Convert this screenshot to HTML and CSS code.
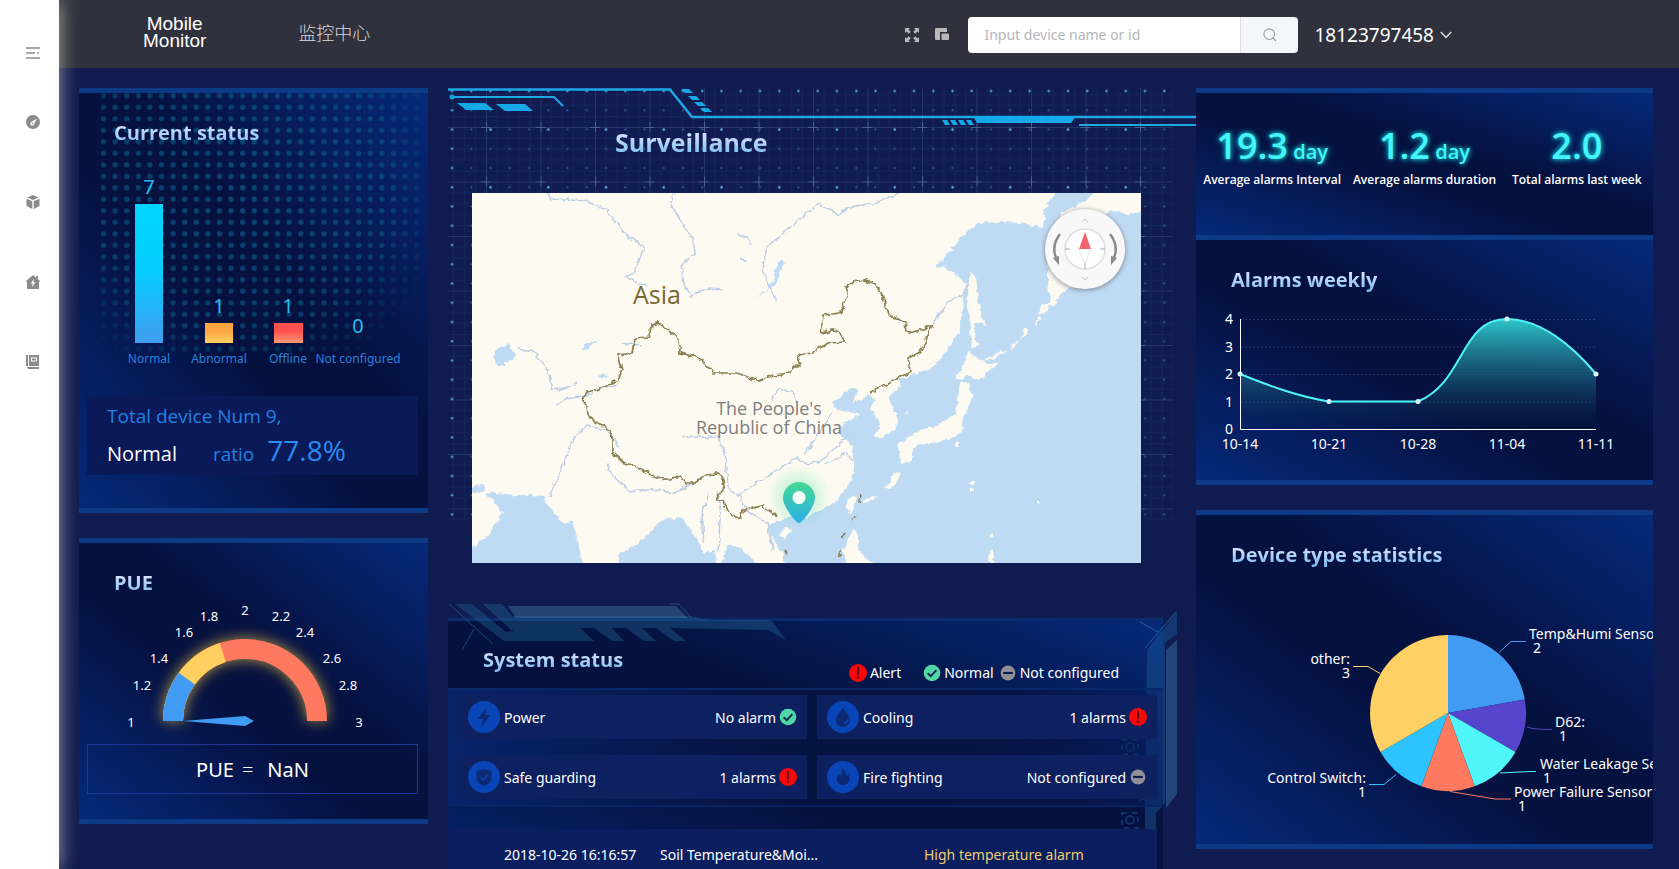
FILE: index.html
```html
<!DOCTYPE html>
<html lang="en">
<head>
<meta charset="utf-8">
<title>Mobile Monitor</title>
<link rel="stylesheet" href="styles.css">
</head>
<body>
<svg class="defs" aria-hidden="true">
  <defs>
    <symbol id="i-alert" viewBox="0 0 18 18"><circle cx="9" cy="9" r="9" fill="#f80808"/><path d="M9 3.500v7" stroke="#5a0714" stroke-width="2" stroke-linecap="round"/><circle cx="9" cy="13.800" r="1.200" fill="#5a0714"/></symbol>
    <symbol id="i-ok" viewBox="0 0 18 18"><circle cx="9" cy="9" r="8.300" fill="#52d6a4"/><path d="M4.600 9.200l3.200 3 5.600-6" fill="none" stroke="#0c2a50" stroke-width="1.900"/></symbol>
    <symbol id="i-none" viewBox="0 0 18 18"><circle cx="9" cy="9" r="7.400" fill="#908f98"/><path d="M4.200 9h9.600" stroke="#0c1f55" stroke-width="2.200"/></symbol>
  </defs>
</svg>
<div class="app">
  <aside class="side">
    <button class="side-btn side-toggle" aria-label="Toggle menu"><svg width="14" height="12" viewBox="0 0 14 12" fill="none" stroke="#8b8b8b" stroke-width="1.300"><path d="M0 1h14M0 11h14M0 6h9M11 6h2"/></svg></button>
    <button class="side-btn" aria-label="Dashboard"><svg width="14" height="14" viewBox="0 0 14 14"><circle cx="7" cy="7" r="7" fill="#8b8b8b"/><path d="M11 3.400L8.300 8.800a2 2 0 1 1-2.600-2z" fill="#fff"/><circle cx="6.600" cy="8.400" r=".8" fill="#8b8b8b"/></svg></button>
    <button class="side-btn" aria-label="Devices"><svg width="14" height="14" viewBox="0 0 14 14" fill="#8b8b8b"><path d="M7 0l5.600 2.500L7 5 1.400 2.500zM.5 3.700l5.800 2.600V14L.5 11zM13.500 3.700L7.700 6.300V14l5.800-3z"/></svg></button>
    <button class="side-btn" aria-label="Power station"><svg width="14" height="14" viewBox="0 0 14 14"><path d="M7 0l7 6-1 1.200V14H1V7.200L0 6zM10 1h2v3l-2-1.600z" fill="#8b8b8b"/><path d="M7.800 4L4.600 8.600h2L6 12l3.400-4.800h-2z" fill="#fff"/></svg></button>
    <button class="side-btn" aria-label="Reports"><svg width="14" height="14" viewBox="0 0 14 14"><path d="M0 0h2v11H0zM3 0h10v11H3zM1 12h12v2H2z" fill="#8b8b8b"/><path d="M5 2.500h6v4H5z" fill="#fff"/><path d="M6 3.500h4v2H6z" fill="#8b8b8b"/></svg></button>
  </aside>
  <div class="page">
    <header class="top">
      <a class="logo" href="#">Mobile<br>Monitor</a>
      <a class="crumb" href="#">监控中心</a>
      <div class="tools">
        <button class="tool" aria-label="Full screen"><svg width="14" height="14" viewBox="0 0 14 14" fill="#b9b8bd"><path d="M0 0h5L3.500 1.500l2.300 2.300-2 2L1.500 3.500 0 5zM14 0v5l-1.500-1.500-2.300 2.300-2-2 2.300-2.300L9 0zM0 14V9l1.500 1.500 2.300-2.300 2 2-2.300 2.300L5 14zM14 14H9l1.500-1.500-2.300-2.300 2-2 2.300 2.300L14 9z"/></svg></button>
        <button class="tool" aria-label="Theme"><svg width="14" height="14" viewBox="0 0 14 14" fill="#b9b8bd"><path d="M0 1q0-1 1-1h10q1 0 1 1v3H5v8H1q-1 0-1-1z"/><rect x="6.500" y="5.500" width="7.500" height="6.500" rx="1"/></svg></button>
        <form class="search">
          <input type="text" aria-label="Search device" placeholder="Input device name or id">
          <button type="button" aria-label="Search"><svg width="14" height="14" viewBox="0 0 14 14" fill="none" stroke="#9a9ca3" stroke-width="1.100"><circle cx="6.200" cy="6.200" r="5.300"/><path d="M10 10l3 3"/></svg></button>
        </form>
        <button class="user">18123797458 <svg width="12" height="8" viewBox="0 0 12 8" fill="none" stroke="#e6e6ea" stroke-width="1.300"><path d="M.8 1L6 6.500 11.200 1"/></svg></button>
      </div>
    </header>
    <main class="board">
      <div class="col">
        <section class="panel dotted">
          <svg class="dots" viewBox="0 0 349 264" aria-hidden="true">
            <defs>
              <pattern id="dp" width="11.600" height="11.500" patternUnits="userSpaceOnUse" x="19" y="-3"><circle cx="5.500" cy="5.700" r="2.700" fill="#0d5f88"/></pattern>
              <radialGradient id="dg" gradientUnits="userSpaceOnUse" cx="160" cy="90" r="215"><stop offset="0" stop-color="#fff" stop-opacity=".7"/><stop offset=".7" stop-color="#fff" stop-opacity=".55"/><stop offset="1" stop-color="#fff" stop-opacity="0"/></radialGradient>
              <mask id="dm"><rect width="349" height="264" fill="url(#dg)"/></mask>
            </defs>
            <rect x="20" width="322" height="260" fill="url(#dp)" mask="url(#dm)"/>
          </svg>
          <h2>Current status</h2>
          <svg class="chart" viewBox="79 147 349 243" role="img" aria-label="Devices by status">
            <defs>
              <linearGradient id="b1" x2="0" y2="1"><stop offset="0" stop-color="#00d4ff"/><stop offset=".5" stop-color="#06ccff"/><stop offset="1" stop-color="#429bef"/></linearGradient>
              <linearGradient id="b2" x2="0" y2="1"><stop offset=".4" stop-color="#ffa640"/><stop offset="1" stop-color="#ffd164"/></linearGradient>
              <linearGradient id="b3" x2="0" y2="1"><stop offset=".4" stop-color="#ff5050"/><stop offset="1" stop-color="#ff9a70"/></linearGradient>
            </defs>
            <rect x="135" y="204" width="28" height="139" fill="url(#b1)"/>
            <rect x="205" y="323" width="28" height="20" fill="url(#b2)"/>
            <rect x="274" y="323" width="29" height="20" fill="url(#b3)"/>
            <g class="bar-num"><text x="149" y="194">7</text><text x="219" y="313">1</text><text x="288" y="313">1</text><text x="358" y="333">0</text></g>
            <g class="bar-lab"><text x="149" y="363">Normal</text><text x="219" y="363">Abnormal</text><text x="288" y="363">Offline</text><text x="358" y="363">Not configured</text></g>
          </svg>
          <div class="total">
            <p>Total device Num 9,</p>
            <p class="ratio"><b>Normal</b><span>ratio</span><strong>77.8%</strong></p>
          </div>
        </section>
        <section class="panel pue">
          <h2>PUE</h2>
          <svg class="chart" viewBox="79 597 349 143" role="img" aria-label="PUE gauge">
            <defs><filter id="glow" x="-30%" y="-30%" width="160%" height="160%"><feGaussianBlur stdDeviation="7"/></filter></defs>
            <path d="M173 721A72 72 0 0 1 317 721" fill="none" stroke="#c9a545" stroke-width="22" opacity=".8" filter="url(#glow)"/>
            <g fill="none" stroke-width="20">
              <path d="M173 721A72 72 0 0 1 317 721" stroke="#ff7860"/>
              <path d="M173 721A72 72 0 0 1 222.800 652.500" stroke="#ffd060"/>
              <path d="M173 721A72 72 0 0 1 186.800 678.700" stroke="#429bf2"/>
            </g>
            <path d="M183 721l62-5 9 5-9 5z" fill="#429bf2"/>
            <g class="gauge-lab"><text x="131" y="727">1</text><text x="142" y="690">1.2</text><text x="159" y="663">1.4</text><text x="184" y="637">1.6</text><text x="209" y="621">1.8</text><text x="245" y="615">2</text><text x="281" y="621">2.2</text><text x="305" y="637">2.4</text><text x="332" y="663">2.6</text><text x="348" y="690">2.8</text><text x="359" y="727">3</text></g>
          </svg>
          <div class="pue-value"><span>PUE</span><i>=</i><span>NaN</span></div>
        </section>
      </div>

      <div class="col mid">
        <section class="surv">
          <svg class="surv-bg" viewBox="448 88 748 434" aria-hidden="true">
            <defs>
              <pattern id="g1" width="54.500" height="54.500" patternUnits="userSpaceOnUse" x="486" y="127"><path d="M0 11H54M0 22H54M0 33H54M0 44H54M11 0V54M22 0V54M33 0V54M44 0V54" stroke="#1c2f6a" stroke-width="1" opacity=".5"/><path d="M0 0H54.500M0 0V54.500" stroke="#2c3f78" stroke-width="2" opacity=".7"/><path d="M0 0H5M0 0V5M49.500 0h5M0 49.500v5" stroke="#4a5f92" stroke-width="2"/></pattern>
              <pattern id="g2" width="19.250" height="19.250" patternUnits="userSpaceOnUse" x="442" y="81"><circle cx="10" cy="10" r="1" fill="#2a639a"/></pattern>
              <pattern id="g3" width="57.750" height="57.750" patternUnits="userSpaceOnUse" x="442" y="81"><circle cx="48.500" cy="48.500" r="1.200" fill="#56b9ea"/></pattern>
              <pattern id="g4" width="19.250" height="19.250" patternUnits="userSpaceOnUse" x="442" y="81"><circle cx="10" cy="10" r="1.100" fill="#56b9ea"/></pattern>
            </defs>
            <rect x="448" y="88" width="725" height="432" fill="url(#g1)"/>
            <rect x="448" y="88" width="725" height="432" fill="url(#g2)"/>
            <rect x="448" y="88" width="725" height="432" fill="url(#g3)"/>
            <path d="M448 88h725v8H458v424h-10z" fill="url(#g4)"/>
            <g fill="none" stroke="#1fa8e4" stroke-width="2"><path d="M448 89.500h222l22 27.500h504" stroke-width="2.500"/><path d="M452 97h102l9 9M1079 125h117"/></g>
            <g fill="#14a8e8"><circle cx="452" cy="97" r="2.500"/><path d="M457 103h28l9 7h-28zM496 104h29l8 7h-28zM681 89h8l4 4h-8zM688 96h8l4 4h-8zM694 102h8l4 4h-8zM700 108h8l4 4h-8zM973 116h103l-5 7h-94zM942 120h5l3 5h-5zM950 120h5l3 5h-5zM958 120h5l3 5h-5zM966 120h5l3 5h-5z"/></g>
          </svg>
          <h2>Surveillance</h2>
          <svg class="map" viewBox="0 0 669 370" role="img" aria-label="Map of Asia">
            <defs>
              <filter id="rough" x="-2%" y="-2%" width="104%" height="104%"><feTurbulence type="fractalNoise" baseFrequency=".16" numOctaves="2" seed="4"/><feDisplacementMap in="SourceGraphic" scale="6" xChannelSelector="R" yChannelSelector="G"/></filter>
              <radialGradient id="pg"><stop offset="0" stop-color="#4fe0a8" stop-opacity=".5"/><stop offset="1" stop-color="#4fe0a8" stop-opacity="0"/></radialGradient>
              <linearGradient id="pin" x2="0" y2="1"><stop offset="0" stop-color="#45d893"/><stop offset="1" stop-color="#2aaee8"/></linearGradient>
              <filter id="soft" x="-30%" y="-30%" width="160%" height="160%"><feGaussianBlur stdDeviation="2"/></filter>
            </defs>
            <rect width="669" height="370" fill="#bfdbf3"/>
            <g fill="#fdfaf1" filter="url(#rough)">
              <path d="M-9-9H597L581 4 570 20 574 25 571 34 548 30 528 29 505 30 495 39 481 54 463 74 475 75 488 84 495 94 491 104 490 127 488 137 475 157 458 177 438 182 426 187 428 194 416 204 426 227 423 237 411 244 403 244 408 234 403 222 398 215 403 207 398 202 381 210 385 197 378 195 368 205 360 210 365 217 378 219 388 222 371 230 368 240 380 254 383 270 380 287 365 307 350 317 335 324 315 324 305 327 296 334 301 347 311 360 313 380H293L284 370 270 355 256 352 245 380 243 357 231 360 226 347 210 324 188 327 181 337 161 354 147 360V380H113L101 327 93 331 80 317 71 304 45 302 13 299 31 319 18 340 1 354-9 356z"/>
              <path d="M602 14L616 5 625-6H680V15L655 22 640 17 625 25 600 60 610 90 595 97 588 103 580 115 577 100 575 70 580 35 590 20zM498 80l6 2 2 25 5 20 3 5-11-3-1 17 6 6-8 2-2-17-3-37z"/>
              <path d="M495 159l20 11h13l-22 17-11-5-5 5-7-2 8-10zM488 189l8 1 4 14-8 20-2 16-8 4-17 5-16 3-10 4v13l-10 2-3-19 22-15 16-4 10-7 10-6 2-14z"/>
              <path d="M381 302l3 2-5 18-6-9zM381 337l5 3v17l14 13v8H376l-5-20zM314 334l6 3-7 9-6-5zM570 110l10 0-6 9-8 3zM565 125l6-1-8 10zM552 136l5 0-9 12zM541 150l6-1-8 10zM528 158l8-1-16 9-8 2zM422 280l7 1-7 13-12 2 8-7zM391 307l14-5-3 5-11 3zM434 218l3 1-2 3zM498 289h4v3h-4zM498 295h3v3h-3zM518 341h4v4h-4zM518 357h3v12h-4zM484 249h3v5h-4zM565 307h2v3h-2z"/>
            </g>
            <g fill="#bfdbf3" filter="url(#rough)"><path d="M22 158l15-8 7 12-8 7-9 4-5-6zM282 106l14-8 12-31 5 2-10 23zM110 158l3-7 15-5-10 8zM126 183l6-3 4 3-5 2zM361 211l7-4v8zM0 294l13-3-2 9-11-1z"/></g>
            <g fill="none" stroke="#bccde6" stroke-width="1.400" filter="url(#rough)">
              <path d="M75 0l4 6 35 2 20 9 20 25 18 12-9 25-10 5 22 9M202 0l-3 12 22 34 2 14-14 12 3 20 7 10 18-7 15 1M368 22l-22-11-51 43-5 22 4 8 10 24M348 12l18 10 12-8 24-4 30-12"/>
              <path d="M45 156l18 3 13 19 4 19 18-3M77 303l10-21 16-40 13-10 20 6 12 16M135 270l5 12 18 17 30-3 11 5M200 300l30-14M210 244l36 0 8 20 2 30 10 10 18-14 40-25 12 6 14-4 26-25M299 208l7-12 14 2 5 14M236 300l-6 20 2 30M246 298l2 30-2 32M267 300l8 18 20 12 6 28M352 272l22-12 8 8M460 133l16-25 16-6 3-10M361 220l-28 40"/>
              <path d="M85 212l8-6 15-2 14-4M105 190l-18 8M265 42l10 2 5 8M267 65l8 4M215 102l6 3M128 195l16-3M150 150l18 3"/>
            </g>
            <g fill="none" stroke="#8b8052" stroke-width="1.700" filter="url(#rough)">
              <path d="M305 324L298 318 290 313 270 318 268 326 258 320 251 309 245 307 252 294 251 287 245 281 235 282 223 290H215L208 283 198 287 181 283 165 274 151 269 140 260V242L133 233 123 229 116 222 115 212 109 207 115 199 125 197 146 187 150 177 146 162 160 160 163 145 178 144 180 132 187 130 198 138 207 147 208 160 225 164 234 170 240 180 265 180 286 188 301 182 318 180 328 170 326 162 341 160 355 150 373 149 368 140 361 137 350 140 348 138 353 122 368 120 376 100 374 94 381 89 393 87 401 90 410 99 413 112 416 122 433 129 436 140 448 137 460 133 454 147 448 160 436 164 438 179 418 189 398 200"/>
              <path d="M312 357l3 5M389 302l-2 8M384 323l-4 4M373 339l-3 6M368 357v6"/>
            </g>
            <text class="map-asia" x="185" y="111">Asia</text>
            <text class="map-country"><tspan x="297" y="222">The People's</tspan><tspan x="297" y="241">Republic of China</tspan></text>
            <circle cx="327" cy="304" r="32" fill="url(#pg)"/>
            <circle cx="327" cy="305" r="8" fill="#f2fdf8"/>
            <path fill-rule="evenodd" d="M327 330c-3 0-16-16-16-25a16 16 0 0 1 32 0c0 9-13 25-16 25zM327 298a6.500 6.500 0 1 0 .1 0z" fill="url(#pin)"/>
            <circle cx="613" cy="57" r="41" fill="#667" opacity=".55" filter="url(#soft)"/>
            <circle cx="613" cy="56" r="40" fill="#f8f8f9"/>
            <circle cx="613" cy="56" r="20" fill="#fff" stroke="#dedee2" stroke-width="1.500"/>
            <path d="M593 56h5M628 56h5M613 70v6" stroke="#aaa" stroke-width="1"/>
            <path d="M607 56l6-17 6 17z" fill="#f5626c"/><path d="M607 56l6 15 6-15" fill="#fff" stroke="#d8d8dc" stroke-width=".7"/>
            <path d="M588 41c-7 9-7 18-3 26M638 41c7 9 7 18 3 26" fill="none" stroke="#8a8a8d" stroke-width="2.500"/>
            <path d="M581 65l6-2v9zM645 65l-6-2v9z" fill="#8a8a8d"/>
            <path d="M610 29l3-3 3 3M610 84l3 3 3-3" fill="none" stroke="#c6c6cc" stroke-width="1"/>
          </svg>
        </section>
        <section class="system">
          <svg class="frame-top" viewBox="448 600 340 50" width="340" height="50" aria-hidden="true">
            <path d="M455 604h17l34 28 8-1-30-27h18l10 12h178l20 4h61l15 20-18-10-98-2 16 13h-12l-18-13h-14l14 13h-12l-18-13h-14l12 13h-12l-18-13h-14l14 13h-90z" fill="#1c5d8c" opacity=".45"/>
            <path d="M508 606h168l12 12H516z" fill="#4a7fae" opacity=".4"/>
            <path d="M449 604l44 40M474 629l-12 21M669 604h10l12 14M484 604l28 26" fill="none" stroke="#2d7ba6" opacity=".5"/>
          </svg>
          <svg class="frame-side" viewBox="1110 610 70 260" width="70" height="260" aria-hidden="true">
            <path d="M1147 650l30-38v22l-12 9v160l-9 10v56h-11v-70l-7 4 7-14z" fill="#1d5c9a" opacity=".45"/>
            <path d="M1166 650l11-10v154l-11 14z" fill="#3d79ab" opacity=".45"/>
            <path d="M1140 622l18 10M1145 648l31-36" stroke="#3b82ad" opacity=".6"/>
            <g fill="none" stroke="#1f5a9b" stroke-width="1.500" opacity=".6"><path stroke-dasharray="5 5" d="M1122 740h16v14h-16zM1122 813h16v15h-16zM1122 847h16v26h-16z"/><circle cx="1130" cy="747" r="4"/><circle cx="1130" cy="820" r="4"/><path d="M1126 853h8M1126 857h8M1126 861h8M1126 865h8"/></g>
          </svg>
          <div class="sys-head">
            <h2>System status</h2>
            <ul class="legend">
              <li class="lg-alert"><svg class="st"><use href="#i-alert"/></svg>Alert</li>
              <li><svg class="st"><use href="#i-ok"/></svg>Normal</li>
              <li><svg class="st"><use href="#i-none"/></svg>Not configured</li>
            </ul>
          </div>
          <div class="cells">
            <div class="cell"><svg class="ci" viewBox="0 0 32 32"><circle cx="16" cy="16" r="16" fill="#0846b8"/><path d="M19 7l-10 11h6l-2 8 10-12h-6z" fill="#0c2a74"/></svg><span>Power</span><em>No alarm</em><svg class="st"><use href="#i-ok"/></svg></div>
            <div class="cell"><svg class="ci" viewBox="0 0 32 32"><circle cx="16" cy="16" r="16" fill="#0846b8"/><path d="M16 7c4 5 7 8 7 12a6.500 6.500 0 0 1-14 0c0-4 3-7 7-12z" fill="#0c2a74"/><path d="M17 22c2 0 4-1 4-4" stroke="#0846b8" fill="none" stroke-width="1.500"/></svg><span>Cooling</span><em>1 alarms</em><svg class="st"><use href="#i-alert"/></svg></div>
            <div class="cell"><svg class="ci" viewBox="0 0 32 32"><circle cx="16" cy="16" r="16" fill="#0846b8"/><path d="M16 8c3 1 5 1.500 7.500 1.500V17c0 4-4 6.500-7.500 8-3.500-1.500-7.500-4-7.500-8V9.500C11 9.500 13 9 16 8z" fill="#0c2a74"/><path d="M12.500 16l3 3 4.500-5" stroke="#0846b8" fill="none" stroke-width="1.500"/></svg><span>Safe guarding</span><em>1 alarms</em><svg class="st"><use href="#i-alert"/></svg></div>
            <div class="cell"><svg class="ci" viewBox="0 0 32 32"><circle cx="16" cy="16" r="16" fill="#0846b8"/><path d="M15 7c4 3 4 5 4 8l2-2c2 3 2 5 1 7a6.500 6.500 0 0 1-12 0c-1-3 0-5 2-7l1 2c2-2 2-5 2-8z" fill="#0c2a74"/></svg><span>Fire fighting</span><em>Not configured</em><svg class="st"><use href="#i-none"/></svg></div>
          </div>
          <table class="log"><tbody><tr><td class="c-time">2018-10-26 16:16:57</td><td class="c-dev">Soil Temperature&amp;Moi...</td><td class="c-msg">High temperature alarm</td></tr></tbody></table>
        </section>
      </div>

      <div class="col">
        <section class="panel stats">
          <div class="stat"><p class="big">19.3 <small>day</small></p><p>Average alarms Interval</p></div>
          <div class="stat"><p class="big">1.2 <small>day</small></p><p>Average alarms duration</p></div>
          <div class="stat"><p class="big">2.0</p><p>Total alarms last week</p></div>
        </section>
        <section class="panel weekly">
          <h2>Alarms weekly</h2>
          <svg class="chart" viewBox="1196 294 457 166" role="img" aria-label="Alarms per week">
            <defs><linearGradient id="ar" gradientUnits="userSpaceOnUse" x1="0" y1="319" x2="0" y2="429"><stop offset="0" stop-color="#2ecfcf" stop-opacity=".95"/><stop offset=".5" stop-color="#1c6f86" stop-opacity=".65"/><stop offset="1" stop-color="#083050" stop-opacity="0"/></linearGradient></defs>
            <path d="M1241 319.500h355M1241 347h355M1241 374.500h355M1241 402h355" stroke="#8fa3d0" stroke-width="1" stroke-dasharray="2 2" opacity=".25"/>
            <path d="M1240 374C1270 386 1299 397 1329 401.500H1418C1465 382 1460 319 1507 319 1540 319 1572 345 1596 374V429H1240z" fill="url(#ar)"/>
            <path d="M1240.500 319V429.500H1596" fill="none" stroke="#fff" stroke-width="1"/>
            <path d="M1240 374C1270 386 1299 397 1329 401.500H1418C1465 382 1460 319 1507 319 1540 319 1572 345 1596 374" fill="none" stroke="#4ff4f6" stroke-width="2"/>
            <g fill="#d8ffff"><circle cx="1240" cy="374" r="2.500"/><circle cx="1329" cy="401.500" r="2.500"/><circle cx="1418" cy="401.500" r="2.500"/><circle cx="1507" cy="319" r="2.500"/><circle cx="1596" cy="374" r="2.500"/></g>
            <g class="ax-y"><text x="1233" y="324">4</text><text x="1233" y="352">3</text><text x="1233" y="379">2</text><text x="1233" y="407">1</text><text x="1233" y="434">0</text></g>
            <g class="ax-x"><text x="1240" y="449">10-14</text><text x="1329" y="449">10-21</text><text x="1418" y="449">10-28</text><text x="1507" y="449">11-04</text><text x="1596" y="449">11-11</text></g>
          </svg>
        </section>
        <section class="panel types">
          <h2>Device type statistics</h2>
          <svg class="chart" viewBox="1196 569 457 275" role="img" aria-label="Devices by type">
            <path d="M1448 713V635A78 78 0 0 1 1524.800 699.500z" fill="#429bf2"/>
            <path d="M1448 713L1524.800 699.500A78 78 0 0 1 1515.500 752z" fill="#5545cc"/>
            <path d="M1448 713L1515.500 752A78 78 0 0 1 1474.700 786.300z" fill="#50f5fa"/>
            <path d="M1448 713L1474.700 786.300A78 78 0 0 1 1421.300 786.300z" fill="#ff7860"/>
            <path d="M1448 713L1421.300 786.300A78 78 0 0 1 1380.500 752z" fill="#2cc3ff"/>
            <path d="M1448 713L1380.500 752A78 78 0 0 1 1448 635z" fill="#ffd064"/>
            <g fill="none" stroke-width="1">
              <path d="M1499 652.500l12-11h15" stroke="#429bf2"/><path d="M1527 727q6 2.500 25 2.500" stroke="#5545cc"/><path d="M1500 773l30-1.500h6" stroke="#50f5fa"/><path d="M1450 791.500l45 7.500h16" stroke="#ff7860"/><path d="M1396 774.500l-12 10h-15" stroke="#2cc3ff"/><path d="M1380 673.500l-12-7h-15" stroke="#ffd064"/>
            </g>
            <g class="pie-lab">
              <text><tspan x="1529" y="639">Temp&amp;Humi Sensor:</tspan><tspan x="1533" y="653">2</tspan></text>
              <text><tspan x="1555" y="727">D62:</tspan><tspan x="1559" y="741">1</tspan></text>
              <text><tspan x="1540" y="769">Water Leakage Sensor:</tspan><tspan x="1543" y="783">1</tspan></text>
              <text><tspan x="1514" y="797">Power Failure Sensor:</tspan><tspan x="1518" y="811">1</tspan></text>
            </g>
            <g class="pie-lab end">
              <text><tspan x="1350" y="664">other:</tspan><tspan x="1350" y="678">3</tspan></text>
              <text><tspan x="1366" y="783">Control Switch:</tspan><tspan x="1366" y="797">1</tspan></text>
            </g>
          </svg>
        </section>
      </div>
    </main>
  </div>
</div>
</body>
</html>
```
FILE: styles.css
```css
* { box-sizing: border-box; }
body {
  margin: 0;
  height: 100vh;
  overflow: hidden;
  background: #101b50;
  color: #fff;
  font-family: "Noto Sans", "Open Sans", "Noto Sans CJK SC", sans-serif;
  font-size: 14px;
}
h2, p, ul { margin: 0; padding: 0; }
button { border: 0; background: none; padding: 0; font: inherit; color: inherit; cursor: pointer; }
a { color: inherit; text-decoration: none; }
svg { display: block; }
.defs { position: absolute; width: 0; height: 0; }
.app { display: flex; height: 100vh; }

.side {
  flex: 0 0 59px;
  background: #fff;
  padding-top: 24px;
  display: flex;
  flex-direction: column;
  z-index: 2;
  box-shadow: 0 0 20px rgba(230, 225, 205, .7);
}
.side-btn { height: 80px; padding-left: 7px; display: grid; place-items: center; }
.side-toggle { height: 58px; }

.page { flex: 1; min-width: 0; }
.top {
  height: 68px;
  background: #30313d;
  display: flex;
  align-items: center;
  padding: 0 227px 0 84px;
}
.logo { font: 19px/17px "Liberation Sans", Arial, sans-serif; text-align: center; padding-bottom: 4px; }
.crumb { margin-left: 92px; font-family: "Noto Sans CJK SC", sans-serif; font-size: 18px; font-weight: 300; color: #d6d6da; padding-bottom: 4px; }
.tools { margin-left: auto; display: flex; align-items: center; gap: 16px; padding-top: 1px; }
.search { display: flex; margin-left: 3px; }
.search input {
  width: 272px;
  height: 36px;
  border: 0;
  border-radius: 4px 0 0 4px;
  padding: 0 16px;
  font: 14px "Noto Sans", "Open Sans", sans-serif;
  background: #fff;
}
.search input::placeholder { color: #b4b6bc; opacity: 1; }
.search button { width: 58px; height: 36px; background: #f5f6fb; border-left: 1px solid #dcdfe6; border-radius: 0 4px 4px 0; display: grid; place-items: center; }
.user { display: flex; align-items: center; gap: 6px; font-size: 19px; line-height: 24px; }

.board {
  display: grid;
  grid-template-columns: 349fr 768fr 457fr;
  align-items: start;
  padding: 20px 26px 0 20px;
}
.mid { padding-left: 20px; min-width: 0; }
.col { min-width: 0; }

.panel {
  position: relative;
  border-top: 5px solid #0c3a86;
  border-bottom: 5px solid #0c3a86;
  background: linear-gradient(to top right, #052979 0%, #061c5c 22%, #05113f 42%, #05113f 58%, #061c5c 78%, #052979 100%);
  margin-bottom: 25px;
  padding-top: 26px;
  overflow: hidden;
}
h2 {
  font-family: "Open Sans", "Noto Sans", sans-serif;
  font-size: 20px;
  line-height: 28px;
  font-weight: 700;
  color: transparent;
  background: linear-gradient(#d3e2ff 25%, #84bff2 85%);
  background-clip: text;
  -webkit-background-clip: text;
  width: max-content;
}
.panel h2 { position: relative; margin-left: 35px; }
.chart { position: relative; width: 100%; height: auto; }
.dots { position: absolute; top: 0; left: 0; width: 100%; }
.dotted { padding-bottom: 33px; }

.bar-num text { font-size: 20px; fill: #2cb8ec; text-anchor: middle; }
.bar-lab text { font-size: 12px; fill: #2a80dc; text-anchor: middle; }
.gauge-lab text { font-size: 13px; fill: #fff; text-anchor: middle; }

.total { position: relative; margin: 6px 10px 0 8px; height: 79px; padding: 6px 20px; background: #0a1958; color: #2380e0; font-family: "Open Sans", "Noto Sans", sans-serif; font-size: 19px; line-height: 28px; }
.ratio { display: flex; align-items: baseline; line-height: 40px; }
.ratio b { font-size: 20px; font-weight: 400; color: #fff; margin-right: 36px; }
.ratio strong { font-size: 28px; font-weight: 400; color: #2a8bf0; margin-left: 13px; }

.pue { padding-bottom: 25px; }
.pue-value { margin: 4px 10px 0 8px; height: 50px; border: 1px solid #20329c; display: flex; justify-content: center; align-items: center; font-size: 20px; }
.pue-value i { font-style: normal; font-weight: 300; margin: 0 14px 0 8px; }

.surv { position: relative; height: 475px; padding: 38px 55px 0 24px; }
.surv-bg { position: absolute; top: 0; left: 0; width: 100%; }
.surv h2 { position: relative; font-size: 25px; line-height: 32px; margin: 0 0 35px 143px; }
.map { position: relative; width: 100%; height: auto; font-family: "Open Sans", "Noto Sans", sans-serif; }
.map-asia { font-size: 25px; fill: #7c6630; text-anchor: middle; }
.map-country { font-size: 18px; fill: #7f7f7f; text-anchor: middle; }

.system {
  position: relative;
  margin: 55px 33px 0 0;
  padding: 28px 0 0;
  border-top: 3px solid #0b2b6c;
  background: linear-gradient(to top right, #05246e 0%, #05123f 38%, #05123f 60%, #052979 100%);
}
.frame-top { position: absolute; top: -21px; left: 0; }
.frame-side { position: absolute; top: -11px; right: -17px; }
.sys-head { position: relative; display: flex; justify-content: space-between; align-items: flex-end; padding: 0 44px 5px 35px; height: 39px; }
.sys-head h2 { align-self: flex-start; margin-top: -3px; }
.legend { list-style: none; display: flex; line-height: 20px; }
.legend li { display: flex; align-items: center; gap: 3px; margin-left: 5px; }
.legend .lg-alert { margin-right: 17px; }
.st { width: 18px; height: 18px; flex: none; }
.cells {
  position: relative;
  display: grid;
  grid-template-columns: 349fr 340fr;
  gap: 16px 10px;
  padding: 5px 6px 6px 10px;
  border-top: 2px solid #0a2768;
  border-bottom: 2px solid #0a2362;
  background: linear-gradient(90deg, #07236a, #051340 45%, #051340 70%, rgba(5, 30, 100, .4));
}
.cell { height: 44px; padding: 0 10px; display: flex; align-items: center; background: #0d205f; }
.ci { width: 32px; height: 32px; margin-right: 4px; }
.cell em { font-style: normal; margin-left: auto; margin-right: 3px; }
.log { position: relative; width: calc(100% - 6px); margin-top: 22px; border-collapse: collapse; table-layout: fixed; background: #0b1f60; }
.log td { height: 50px; padding: 0; white-space: nowrap; }
.log .c-time { width: 212px; padding-left: 56px; }
.log .c-dev { width: 264px; }
.log .c-msg { color: #f0cc6e; }

.stats { display: grid; grid-template-columns: repeat(3, 1fr); text-align: center; padding: 33px 0 45px; margin: 0; font-family: "Open Sans", "Noto Sans", sans-serif; font-size: 12px; line-height: 20px; font-weight: 600; }
.stat p { white-space: nowrap; }
.stat .big { font-size: 36px; line-height: 40px; font-weight: 600; margin-bottom: 4px; color: #45f5fa; text-shadow: 0 0 6px #0fb6c4, 0 0 4px #0fb6c4; }
.big small { font-size: 20px; line-height: 20px; margin-left: -4px; }
.weekly { border-top: 0; padding-bottom: 20px; }
.types { margin-bottom: 0; }
.ax-y text { font-size: 14px; fill: #fff; text-anchor: end; }
.ax-x text { font-size: 14px; fill: #fff; text-anchor: middle; }
.pie-lab text { font-size: 14px; fill: #fff; }
.pie-lab.end text { text-anchor: end; }
```
